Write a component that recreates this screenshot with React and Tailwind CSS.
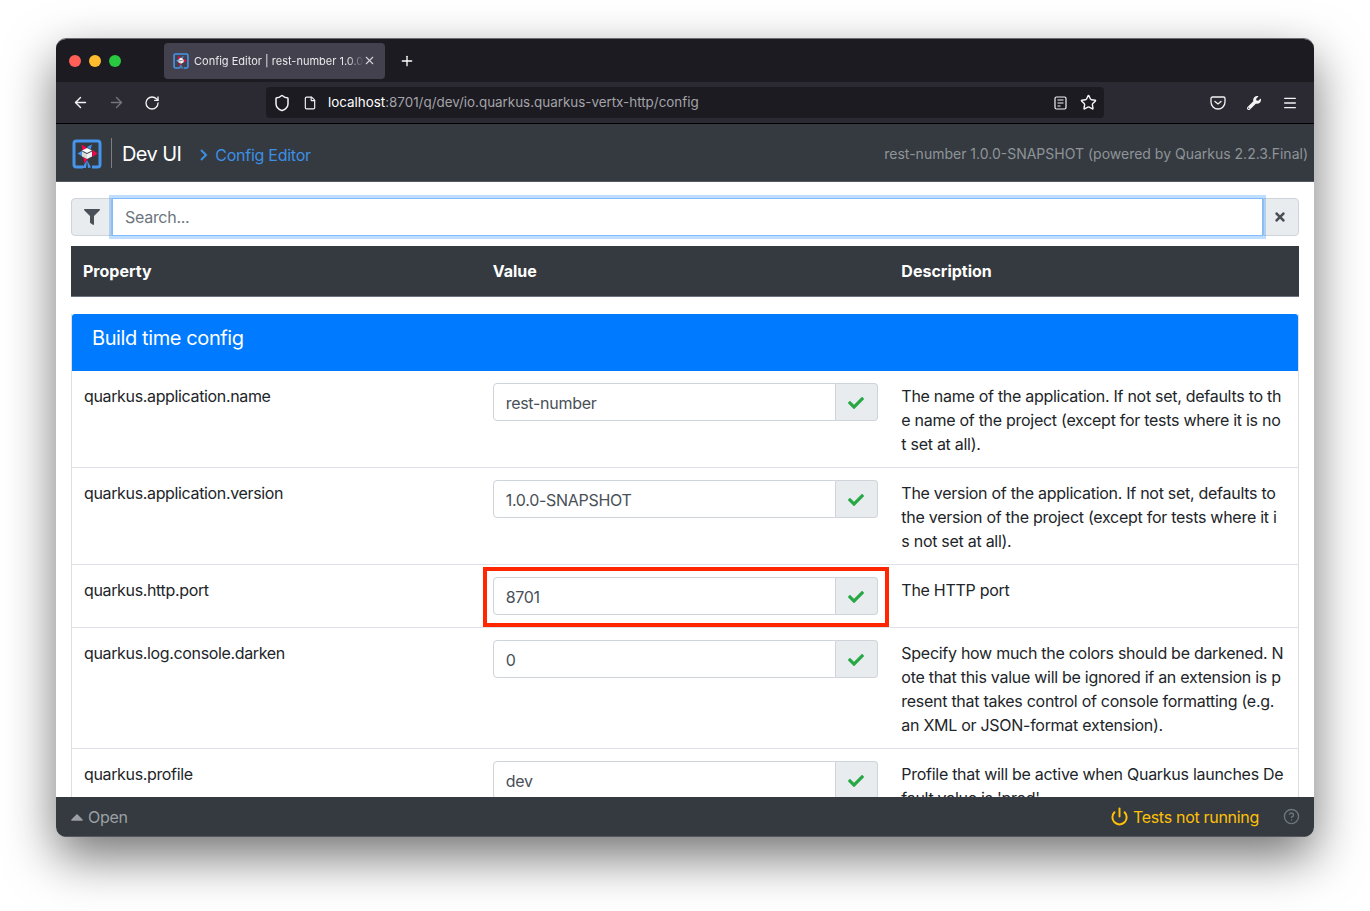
import React from "react";
import {
  ArrowLeft,
  ArrowRight,
  RotateCw,
  Shield,
  File,
  Star,
  Menu,
  Plus,
  X,
  Power,
  CircleHelp,
} from "lucide-react";
import { FaFilter, FaCheck, FaTimes, FaCaretUp, FaWrench } from "react-icons/fa";

const rows = [
  {
    name: "quarkus.application.name",
    value: "rest-number",
    desc: [
      "The name of the application. If not set, defaults to th",
      "e name of the project (except for tests where it is no",
      "t set at all).",
    ],
  },
  {
    name: "quarkus.application.version",
    value: "1.0.0-SNAPSHOT",
    desc: [
      "The version of the application. If not set, defaults to",
      "the version of the project (except for tests where it i",
      "s not set at all).",
    ],
  },
  {
    name: "quarkus.http.port",
    value: "8701",
    desc: ["The HTTP port"],
    highlight: true,
  },
  {
    name: "quarkus.log.console.darken",
    value: "0",
    desc: [
      "Specify how much the colors should be darkened. N",
      "ote that this value will be ignored if an extension is p",
      "resent that takes control of console formatting (e.g.",
      "an XML or JSON-format extension).",
    ],
  },
  {
    name: "quarkus.profile",
    value: "dev",
    desc: [
      "Profile that will be active when Quarkus launches De",
      "fault value is 'prod'",
    ],
  },
];

const Logo = ({ size }) => (
  <svg width={size} height={size} viewBox="0 0 30 30" fill="none">
    <path
      d="M11 28H4.500A2.500 2.500 0 0 1 2 25.500V4.500A2.500 2.500 0 0 1 4.500 2h21A2.500 2.500 0 0 1 28 4.500v21a2.500 2.500 0 0 1-2.500 2.500H20"
      stroke="#4695eb"
      strokeWidth="3"
    />
    <path d="M15 21l-5 8h4z" fill="#4695eb" />
    <path d="M15 21l4 7.500-3 .5z" fill="#4695eb" />
    <path d="M9.500 5.500l5 3-3.500 4z" fill="#ff004a" />
    <path d="M20 5.500l-1.500 5-3.500-2.500z" fill="#4695eb" />
    <path d="M25.500 14.500l-5 3.500v-7z" fill="#ff004a" />
    <path d="M5.500 14.500l5-3v6z" fill="#4695eb" />
    <path d="M11.500 18.500l4 1.500-3.500 4.500z" fill="#ff004a" />
    <path d="M15 9l5 2.500-5 2.500-5-2.500z" fill="#ffffff" />
    <path d="M10 12.500l5 2.500v5l-5-2.500z" fill="#d9d9d9" />
    <path d="M20 12.500l-5 2.500v5l5-2.500z" fill="#f2f2f2" />
  </svg>
);

const ValueInput = ({ value }) => (
  <div className="flex h-[38px] w-full">
    <div className="flex-1 flex items-center pl-[12px] pt-px border border-[#ced4da] rounded-l bg-white text-[#495057]">
      {value}
    </div>
    <div className="w-[42px] flex items-center justify-center pr-px pt-px bg-[#e9ecef] border border-l-0 border-[#ced4da] rounded-r">
      <FaCheck className="text-[16px] text-[#28a745]" />
    </div>
  </div>
);

const App = () => {
  return (
    <div
      className="h-[911px] w-[1370px] overflow-hidden bg-white pt-[38px] pl-[56px]"
      style={{ fontFamily: "Inter, 'Liberation Sans', Arial, sans-serif" }}
    >
      <div className="w-[1258px] h-[799px] flex flex-col rounded-[10px] overflow-hidden border-t border-[#6d6d70] shadow-[0_20px_50px_rgba(0,0,0,0.55)]">
        {/* browser tab strip */}
        <div className="h-[43px] shrink-0 bg-[#1c1b22] flex items-center text-white">
          <div className="flex items-center gap-[8px] pl-[13px] w-[108px]">
            <span className="w-[12px] h-[12px] rounded-full bg-[#ff5f57]" />
            <span className="w-[12px] h-[12px] rounded-full bg-[#febc2e]" />
            <span className="w-[12px] h-[12px] rounded-full bg-[#28c840]" />
          </div>
          <div className="h-[36px] w-[221px] rounded bg-[#42414d] flex items-center pl-[9px] relative">
            <Logo size={16} />
            <span className="ml-[5px] mt-[1px] w-[170px] overflow-hidden whitespace-nowrap text-[11px] text-[#e8e8ea] [mask-image:linear-gradient(to_right,black_90%,transparent)]">
              Config Editor | rest-number 1.0.0-SNAPSHOT
            </span>
            <X size={13} className="absolute right-[9px] text-[#d4d4d8]" />
          </div>
          <Plus size={16} className="ml-[14px] text-white" />
        </div>

        {/* browser nav bar */}
        <div className="h-[42px] shrink-0 bg-[#2b2a33] border-b border-black flex items-center text-[#f4f4f5]">
          <ArrowLeft size={17} className="ml-[16px]" />
          <ArrowRight size={17} className="ml-[19px] text-[#74737a]" />
          <RotateCw size={16} className="ml-[19px]" />
          <div className="ml-[106px] h-[31px] w-[838px] rounded bg-[#1c1b22] flex items-center relative">
            <Shield size={18} className="ml-[7px]" />
            <File size={14} className="ml-[12px]" />
            <span className="ml-[11px] text-[13.4px] whitespace-nowrap text-white">
              localhost
              <span className="text-[#a3a3a8]">:8701/q/dev/io.quarkus.quarkus-vertx-http/config</span>
            </span>
            <div className="absolute right-[7px] flex items-center gap-[13px]">
              <svg width="13" height="14" viewBox="0 0 13 14" fill="none" stroke="#f4f4f5" strokeWidth="1.200">
                <rect x="1" y="1" width="11" height="12" rx="1.500" />
                <path d="M3.500 4h6M3.500 7h6M3.500 10h3" />
              </svg>
              <Star size={17} />
            </div>
          </div>
          <div className="ml-[106px] flex items-center">
            <svg width="16" height="14" viewBox="0 0 16 14" fill="none" stroke="#f4f4f5" strokeWidth="1.300">
              <path d="M2.500 1h11A1.500 1.500 0 0 1 15 2.500V6A7 7 0 0 1 1 6V2.500A1.500 1.500 0 0 1 2.500 1z" />
              <path d="M5 5.500l3 2.500 3-2.500" strokeLinecap="round" />
            </svg>
            <FaWrench className="ml-[21px] text-[14px]" />
            <Menu size={16} className="ml-[21px]" />
          </div>
        </div>

        {/* dev ui header */}
        <div className="h-[58px] shrink-0 bg-[#343a40] flex items-center border-b border-[#555a60]">
          <div className="ml-[16px] mt-[2px]">
            <Logo size={30} />
          </div>
          <div className="ml-[9px] w-px h-[30px] bg-[#7c8085]" />
          <span className="ml-[10px] mt-[2px] text-[20px] tracking-[-0.6px] text-white">Dev UI</span>
          <svg className="ml-[18px] mt-[4px]" width="10" height="14" viewBox="0 0 10 14" fill="none" stroke="#3d8fe5" strokeWidth="2">
            <path d="M2 2l5 5-5 5" />
          </svg>
          <span className="ml-[6px] mt-[4px] text-[16px] tracking-[-0.25px] text-[#3d8fe5]">Config Editor</span>
          <span className="ml-auto mr-[6px] mt-[1px] text-[14px] text-[#8f9499]">
            rest-number 1.0.0-SNAPSHOT (powered by Quarkus 2.2.3.Final)
          </span>
        </div>

        {/* page content */}
        <div className="flex-1 min-h-0 overflow-hidden bg-white px-[15px] pt-[16px] text-[16px] tracking-[-0.28px] text-[#212529]">
          <div className="flex h-[38px]">
            <div className="w-[41px] flex items-center justify-center bg-[#e9ecef] border border-[#ced4da] rounded-l">
              <FaFilter className="text-[16px] text-[#495057]" />
            </div>
            <div className="flex-1 flex items-center pl-[12px] bg-white border border-[#80bdff] shadow-[0_0_0_3px_rgba(0,123,255,0.25)] text-[#6c757d] z-10">
              Search...
            </div>
            <div className="w-[36px] flex items-center justify-center pr-[2px] bg-[#e9ecef] border border-[#ced4da] rounded-r">
              <FaTimes className="text-[14px] text-[#495057]" />
            </div>
          </div>

          <div className="mt-[10px] h-[51px] grid grid-cols-3 items-center bg-[#343a40] border-b border-[#6c757d] text-white font-bold tracking-normal px-[1px]">
            <div className="px-[11px]">Property</div>
            <div className="px-[12px]">Value</div>
            <div className="px-[12px]">Description</div>
          </div>

          <div className="mt-[17px] border-x border-[#dfdfdf]">
            <div className="h-[57px] flex items-center pl-[20px] pb-[9px] bg-[#007bff] text-white text-[20px] tracking-[-0.4px] rounded-t-[3px]">
              Build time config
            </div>
            {rows.map((row) => (
              <div key={row.name} className="grid grid-cols-3 border-b border-[#dee2e6]">
                <div className="px-[12px] pt-[13px] pb-[11px] tracking-[-0.35px]">{row.name}</div>
                <div className="pl-[12px] pr-[11px] py-[12px] relative">
                  <ValueInput value={row.value} />
                  {row.highlight && (
                    <div className="absolute left-[2px] right-0 top-[2px] bottom-0 border-[4px] border-[#ff2600]" />
                  )}
                </div>
                <div className="px-[12px] pt-[13px] pb-[11px] whitespace-nowrap">
                  {row.desc.map((line) => (
                    <div key={line}>{line}</div>
                  ))}
                </div>
              </div>
            ))}
          </div>
        </div>

        {/* footer */}
        <div className="h-[40px] shrink-0 bg-[#343a40] flex items-center border-b border-[#55595f] tracking-[-0.3px]">
          <FaCaretUp className="ml-[11px] text-[20px] text-[#9ca0a4]" />
          <span className="ml-px text-[#9ca0a4]">Open</span>
          <Power size={19} strokeWidth={2.500} className="ml-auto text-[#ffc107]" />
          <span className="ml-[4px] text-[#ffc107]">Tests not running</span>
          <CircleHelp size={17} className="ml-[24px] mr-[14px] text-[#6c757d]" />
        </div>
      </div>
    </div>
  );
};

export default App;
